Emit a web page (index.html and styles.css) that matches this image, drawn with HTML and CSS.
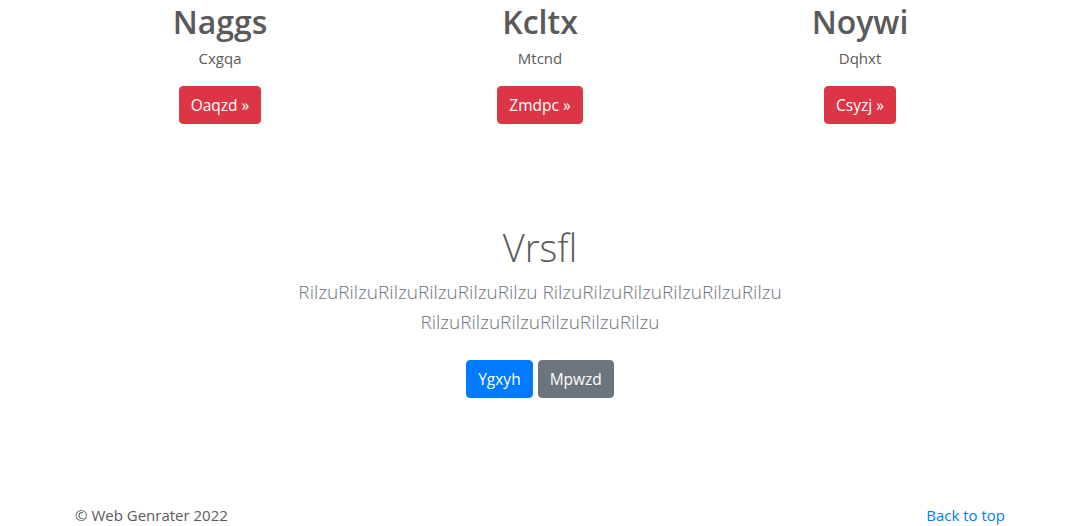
FILE: index.html
```html
<!DOCTYPE html>
<html lang="en">
<head>
<meta charset="utf-8">
<title>Web Genrater</title>
<link rel="stylesheet" href="styles.css">
</head>
<body>
<main class="page">
  <section class="marketing">
    <div class="col">
      <h2 class="col-title">Naggs</h2>
      <p class="col-text">Cxgqa</p>
      <a class="btn btn-danger" href="#">Oaqzd &raquo;</a>
    </div>
    <div class="col">
      <h2 class="col-title">Kcltx</h2>
      <p class="col-text">Mtcnd</p>
      <a class="btn btn-danger" href="#">Zmdpc &raquo;</a>
    </div>
    <div class="col">
      <h2 class="col-title">Noywi</h2>
      <p class="col-text">Dqhxt</p>
      <a class="btn btn-danger" href="#">Csyzj &raquo;</a>
    </div>
  </section>

  <section class="hero">
    <h1 class="hero-title">Vrsfl</h1>
    <p class="lead">RilzuRilzuRilzuRilzuRilzuRilzu RilzuRilzuRilzuRilzuRilzuRilzu RilzuRilzuRilzuRilzuRilzuRilzu</p>
    <div class="hero-actions">
      <a class="btn btn-primary" href="#">Ygxyh</a>
      <a class="btn btn-secondary" href="#">Mpwzd</a>
    </div>
  </section>

  <footer class="footer">
    <p class="copy">&copy; Web Genrater 2022</p>
    <a class="top-link" href="#">Back to top</a>
  </footer>
</main>
</body>
</html>
```
FILE: styles.css
```css
html, body {
  margin: 0;
  padding: 0;
}
body {
  font-family: "Open Sans", "Noto Sans", sans-serif;
  font-size: 16px;
  line-height: 1.5;
  color: #5a5a5a;
  background: #fff;
}
.page {
  width: 960px;
  margin: 0 auto;
  padding-top: 3px;
}
.marketing {
  display: grid;
  grid-template-columns: repeat(3, 1fr);
  text-align: center;
}
.col {
  padding: 0 15px;
}
.col-title {
  margin: 0 0 5px;
  font-size: 32px;
  line-height: 38px;
  font-weight: 600;
}
.col-text {
  margin: 0 0 16px;
  font-size: 15px;
  line-height: 24px;
}
.btn {
  display: inline-block;
  padding: 6px 11px;
  font-size: 15.5px;
  line-height: 24px;
  border: 1px solid transparent;
  border-radius: 4px;
  color: #fff;
  text-decoration: none;
}
.btn-danger {
  background: #dc3545;
  border-color: #dc3545;
}
.btn-primary {
  background: #007bff;
  border-color: #007bff;
}
.btn-secondary {
  background: #6c757d;
  border-color: #6c757d;
}
.hero {
  margin-top: 99px;
  text-align: center;
  padding: 0 15px;
}
.hero-title {
  margin: 0 0 6px;
  font-size: 38px;
  line-height: 48px;
  font-weight: 300;
}
.lead {
  max-width: 600px;
  margin: 0 auto;
  font-size: 19px;
  line-height: 30px;
  font-weight: 300;
  color: #6c757d;
}
.hero-actions {
  display: flex;
  justify-content: center;
  gap: 5px;
  padding: 23px 0 7px;
}
.footer {
  margin-top: 98px;
  padding: 0 15px;
  display: flex;
  justify-content: space-between;
  align-items: center;
}
.copy {
  margin: 0;
  font-size: 15px;
  line-height: 24px;
}
.top-link {
  color: #007bff;
  text-decoration: none;
  font-size: 15px;
  line-height: 24px;
}
```
